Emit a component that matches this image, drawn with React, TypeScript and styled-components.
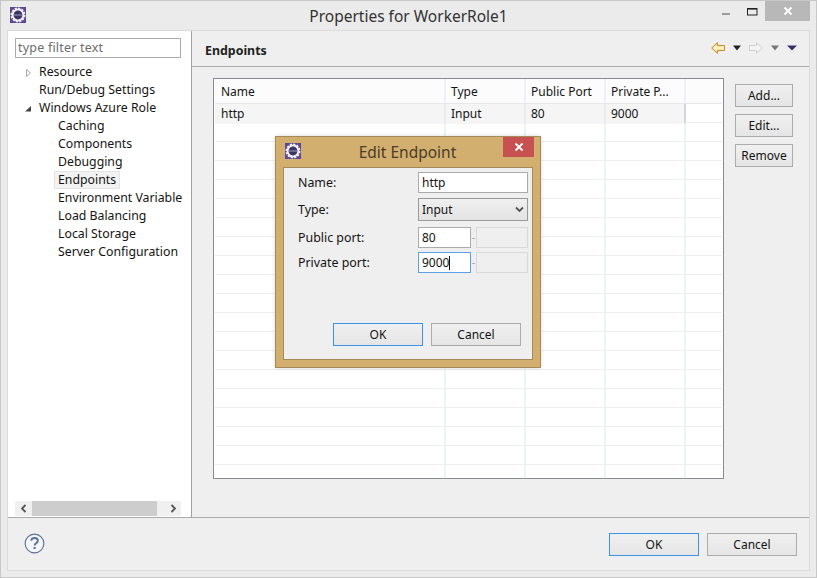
import styled, { createGlobalStyle } from "styled-components";

const GlobalStyle = createGlobalStyle`
  html, body {
    margin: 0;
    padding: 0;
    background: #ebebeb;
  }
  * {
    box-sizing: border-box;
  }
`;

const Window = styled.div`
  width: 817px;
  height: 578px;
  display: flex;
  flex-direction: column;
  position: relative;
  background: #ebebeb;
  border: 1px solid #c8c8c8;
  font-family: "Noto Sans", "Open Sans", sans-serif;
  font-size: 12px;
  color: #141414;
  overflow: hidden;
`;

const TitleBar = styled.div`
  height: 29px;
  flex: none;
  display: flex;
  align-items: flex-start;
  position: relative;
  padding-left: 9px;
  padding-top: 6px;
`;

const TitleText = styled.div`
  position: absolute;
  left: 0;
  right: 0;
  top: 4px;
  text-align: center;
  font-size: 15.5px;
  color: #333;
`;

const Controls = styled.div`
  margin-left: auto;
  margin-top: -6px;
  margin-right: 6px;
  display: flex;
  align-items: flex-start;
`;

const ControlButton = styled.div<{ $close?: boolean }>`
  width: ${(p) => (p.$close ? "45px" : "26px")};
  height: 20px;
  display: flex;
  align-items: center;
  justify-content: center;
  background: ${(p) => (p.$close ? "#b8b8b8" : "transparent")};
  color: #fff;
`;

const Panel = styled.div`
  flex: 1;
  min-height: 0;
  margin: 0 6px 6px;
  display: flex;
  flex-direction: column;
  background: #efefef;
  border: 1px solid #dcdcdc;
`;

const Main = styled.div`
  flex: 1;
  display: flex;
  min-height: 0;
`;

const Sidebar = styled.div`
  width: 184px;
  flex: none;
  display: flex;
  flex-direction: column;
  background: #fff;
  border-right: 1px solid #a0a0a0;
  padding: 7px 10px 0 7px;
`;

const FilterInput = styled.div`
  height: 20px;
  flex: none;
  border: 1px solid #ababab;
  padding-left: 2px;
  line-height: 17px;
  font-size: 12.5px;
  letter-spacing: 0.2px;
  color: #6d6d6d;
`;

const Tree = styled.div`
  flex: 1;
  padding-top: 5px;
  font-size: 12.3px;
`;

const TreeRow = styled.div<{ $depth: number }>`
  height: 18px;
  line-height: 18px;
  display: flex;
  align-items: center;
  white-space: nowrap;
  position: relative;
  padding-left: ${(p) => (p.$depth === 0 ? 24 : 43)}px;
`;

const TreeLabel = styled.span<{ $selected?: boolean }>`
  ${(p) =>
    p.$selected &&
    `
    height: 18px;
    line-height: 16px;
    margin-left: -4px;
    padding: 0 3px;
    background: #f2f2f2;
    border: 1px solid #e4e4e4;
  `}
`;

const Twist = styled.svg`
  position: absolute;
  left: 9px;
  top: 5px;
`;

const HScroll = styled.div`
  height: 15px;
  flex: none;
  margin-bottom: 1px;
  display: flex;
  align-items: center;
  background: #f0f0f0;
`;

const ScrollArrow = styled.div`
  width: 17px;
  height: 15px;
  display: flex;
  align-items: center;
  justify-content: center;
`;

const ScrollThumb = styled.div`
  width: 125px;
  height: 15px;
  margin-right: auto;
  background: #cdcdcd;
`;

const Content = styled.div`
  flex: 1;
  display: flex;
  flex-direction: column;
  min-width: 0;
  min-height: 0;
`;

const PageHeader = styled.div`
  height: 36px;
  flex: none;
  display: flex;
  align-items: center;
  padding: 3px 12px 0 13px;
  border-bottom: 1px solid #a9a9a9;
`;

const PageTitle = styled.div`
  font-weight: 700;
  font-size: 12.4px;
  color: #222;
`;

const NavIcons = styled.div`
  margin-left: auto;
  margin-top: -4px;
  display: flex;
  align-items: center;
  gap: 8px;
`;

const PageBody = styled.div`
  flex: 1;
  min-height: 0;
  display: flex;
  padding: 11px 16px 38px 21px;
  gap: 11px;
`;

const TableBox = styled.div`
  width: 511px;
  flex: none;
  background: #fff;
  border: 1px solid #8a8a94;
  padding: 0 0 1px 1px;
  overflow: hidden;
`;

const HeaderRow = styled.div`
  height: 25px;
  display: grid;
  grid-template-columns: 231px 80px 80px 80px 1fr;
  margin-right: 1px;
  background: #fcfcfc;
  border-bottom: 1px solid #e6e8ec;
`;

const HeaderCell = styled.div`
  padding-left: 5px;
  line-height: 25px;
  height: 24px;
  border-right: 2px solid #eef2f8;
  white-space: nowrap;
  overflow: hidden;

  &:first-child {
    padding-left: 6px;
  }
`;

const Row = styled.div`
  height: 19px;
  display: grid;
  grid-template-columns: 231px 80px 80px 80px 1fr;
  margin-right: 1px;
  border-bottom: 1px solid #eeeeee;
`;

const Cell = styled.div<{ $active?: boolean }>`
  padding-left: 5px;
  line-height: 20px;
  background: ${(p) => (p.$active ? "#f5f5f5" : "transparent")};
  border-right: 2px solid ${(p) => (p.$active ? "#e9ebef" : "#edf2f9")};

  &:first-child {
    padding-left: 6px;
  }

  &:nth-child(4) {
    border-right-color: ${(p) => (p.$active ? "#d4d8de" : "#edf2f9")};
  }
`;

const EmptyCell = styled.div``;

const SideButtons = styled.div`
  display: flex;
  flex-direction: column;
  gap: 7px;
  padding-top: 6px;
`;

const Button = styled.div<{ $width: number; $focused?: boolean }>`
  width: ${(p) => p.$width}px;
  height: 23px;
  display: flex;
  align-items: center;
  justify-content: center;
  background: linear-gradient(#f0f0f0, #e5e5e5);
  border: 1px solid ${(p) => (p.$focused ? "#3c94e8" : "#acacac")};
  color: #141414;
`;

const Footer = styled.div`
  height: 53px;
  flex: none;
  display: flex;
  align-items: center;
  gap: 8px;
  padding: 0 12px 0 16px;
  border-top: 1px solid #a9a9a9;
`;

const HelpIcon = styled.svg`
  margin-right: auto;
  margin-top: -2px;
`;

const DialogFrame = styled.div`
  position: absolute;
  left: 274px;
  top: 135px;
  width: 266px;
  height: 232px;
  display: flex;
  flex-direction: column;
  background: #d2ae6f;
  border: 1px solid #a58a5c;
  box-shadow: 0 0 4px rgba(0, 0, 0, 0.15);
  padding: 0 7px 7px;
`;

const DialogTitleBar = styled.div`
  height: 30px;
  flex: none;
  position: relative;
  display: flex;
  align-items: flex-start;
  margin: 0 -1px;
  padding-top: 6px;
  padding-left: 3px;
`;

const DialogTitle = styled.div`
  position: absolute;
  left: -1px;
  right: 0;
  top: 4px;
  text-align: center;
  font-size: 15.5px;
  color: #4a3d28;
`;

const DialogClose = styled.div`
  margin-left: auto;
  margin-top: -6px;
  width: 31px;
  height: 20px;
  display: flex;
  align-items: center;
  justify-content: center;
  background: #c75050;
`;

const DialogBody = styled.div`
  flex: 1;
  display: flex;
  flex-direction: column;
  background: #efefef;
  border: 1px solid #a58a5c;
  padding: 4px 5px 13px 14px;
`;

const FormRow = styled.div<{ $height: number; $gap: number }>`
  height: ${(p) => p.$height}px;
  margin-top: ${(p) => p.$gap}px;
  display: grid;
  grid-template-columns: 120px 1fr;
  align-items: center;
  flex: none;
`;

const FormLabel = styled.span`
  font-size: 12.4px;
`;

const TextInput = styled.div`
  height: 21px;
  width: 110px;
  background: #fff;
  border: 1px solid #ababab;
  padding-left: 3px;
  line-height: 19px;
`;

const SelectBox = styled.div`
  height: 23px;
  width: 110px;
  display: flex;
  align-items: center;
  justify-content: space-between;
  padding: 0 3px;
  background: linear-gradient(#f0f0f0, #e3e3e3);
  border: 1px solid #9a9a9a;
`;

const PortFields = styled.div`
  display: flex;
  align-items: center;
`;

const PortInput = styled.div<{ $focused?: boolean }>`
  height: 21px;
  width: 53px;
  background: #fff;
  border: 1px solid ${(p) => (p.$focused ? "#5aa0e8" : "#ababab")};
  padding-left: 3px;
  line-height: 19px;
`;

const Caret = styled.span`
  display: inline-block;
  width: 1px;
  height: 14px;
  background: #111;
  vertical-align: -3px;
`;

const PortDash = styled.span`
  width: 5px;
  text-align: center;
  color: #b0b0b0;
`;

const PortDisabled = styled.div`
  height: 21px;
  width: 52px;
  background: #efefef;
  border: 1px solid #d9d9d9;
`;

const DialogButtons = styled.div`
  margin-top: auto;
  display: flex;
  justify-content: flex-end;
  gap: 8px;
  padding-right: 6px;
`;

const treeItems = [
  { label: "Resource", depth: 0, twist: "closed" },
  { label: "Run/Debug Settings", depth: 0 },
  { label: "Windows Azure Role", depth: 0, twist: "open" },
  { label: "Caching", depth: 1 },
  { label: "Components", depth: 1 },
  { label: "Debugging", depth: 1 },
  { label: "Endpoints", depth: 1, selected: true },
  { label: "Environment Variable", depth: 1 },
  { label: "Load Balancing", depth: 1 },
  { label: "Local Storage", depth: 1 },
  { label: "Server Configuration", depth: 1 },
];

const EclipseIcon = () => (
  <svg width="16" height="16" viewBox="0 0 16 16">
    <rect width="16" height="16" fill="#5d4793" />
    <circle cx="8" cy="8" r="5.4" fill="none" stroke="#efefef" strokeWidth="2" />
    <circle cx="8" cy="8" r="6.6" fill="none" stroke="#efefef" strokeWidth="1.8" strokeDasharray="2.2 1.25" />
    <circle cx="8" cy="8" r="4.2" fill="#3d3560" />
    <rect x="4" y="7.2" width="8" height="1.6" fill="#77739b" />
  </svg>
);

const Triangle = ({ color, width = 8 }: { color: string; width?: number }) => (
  <svg width={width} height="6" viewBox={`0 0 ${width} 6`}>
    <path d={`M0 0.5h${width}L${width / 2} 5.5z`} fill={color} />
  </svg>
);

const App = () => {
  return (
    <>
      <GlobalStyle />
      <Window>
        <TitleBar>
          <EclipseIcon />
          <TitleText>Properties for WorkerRole1</TitleText>
          <Controls>
            <ControlButton>
              <svg width="10" height="10" viewBox="0 0 10 10">
                <rect x="1" y="7" width="8" height="2" fill="#9a9a9a" />
              </svg>
            </ControlButton>
            <ControlButton>
              <svg width="11" height="10" viewBox="0 0 11 10">
                <rect x="0.5" y="2.5" width="9.5" height="6.5" fill="none" stroke="#222" />
                <rect x="0.5" y="2" width="9.5" height="1.6" fill="#222" />
              </svg>
            </ControlButton>
            <ControlButton $close>
              <svg width="10" height="10" viewBox="0 0 10 10">
                <path d="M1.5 1.5l7 7M8.5 1.5l-7 7" stroke="#fff" strokeWidth="1.8" />
              </svg>
            </ControlButton>
          </Controls>
        </TitleBar>
        <Panel>
          <Main>
            <Sidebar>
              <FilterInput>type filter text</FilterInput>
              <Tree>
                {treeItems.map((item) => (
                  <TreeRow key={item.label} $depth={item.depth}>
                    {item.twist === "closed" && (
                      <Twist width="8" height="10" viewBox="0 0 8 10">
                        <path d="M2.5 1.5l4 3.5-4 3.5z" fill="#fff" stroke="#a8a8a8" />
                      </Twist>
                    )}
                    {item.twist === "open" && (
                      <Twist width="8" height="10" viewBox="0 0 8 10">
                        <path d="M1 7.5L7 2v5.5z" fill="#444" />
                      </Twist>
                    )}
                    <TreeLabel $selected={item.selected}>{item.label}</TreeLabel>
                  </TreeRow>
                ))}
              </Tree>
              <HScroll>
                <ScrollArrow>
                  <svg width="8" height="9" viewBox="0 0 8 9">
                    <path d="M5.5 1L2 4.5 5.5 8" fill="none" stroke="#555" strokeWidth="1.8" />
                  </svg>
                </ScrollArrow>
                <ScrollThumb />
                <ScrollArrow>
                  <svg width="8" height="9" viewBox="0 0 8 9">
                    <path d="M2.5 1L6 4.5 2.5 8" fill="none" stroke="#555" strokeWidth="1.8" />
                  </svg>
                </ScrollArrow>
              </HScroll>
            </Sidebar>
            <Content>
              <PageHeader>
                <PageTitle>Endpoints</PageTitle>
                <NavIcons>
                  <svg width="14" height="12" viewBox="0 0 14 12">
                    <path d="M0.7 6L6.5 0.7V3.5H13.5V8.5H6.5V11.3z" fill="#fdeebb" stroke="#c98a1e" />
                  </svg>
                  <Triangle color="#222" />
                  <svg width="14" height="12" viewBox="0 0 14 12">
                    <path d="M13.3 6L7.5 0.7V3.5H0.5V8.5H7.5V11.3z" fill="#f4f4f4" stroke="#cfcfcf" />
                  </svg>
                  <Triangle color="#777" />
                  <Triangle color="#3b3368" width={10} />
                </NavIcons>
              </PageHeader>
              <PageBody>
                <TableBox>
                  <HeaderRow>
                    <HeaderCell>Name</HeaderCell>
                    <HeaderCell>Type</HeaderCell>
                    <HeaderCell>Public Port</HeaderCell>
                    <HeaderCell>Private P...</HeaderCell>
                    <EmptyCell />
                  </HeaderRow>
                  <Row>
                    <Cell $active>http</Cell>
                    <Cell $active>Input</Cell>
                    <Cell $active>80</Cell>
                    <Cell $active>9000</Cell>
                    <EmptyCell />
                  </Row>
                  {Array.from({ length: 19 }, (_, i) => (
                    <Row key={i}>
                      <Cell />
                      <Cell />
                      <Cell />
                      <Cell />
                      <EmptyCell />
                    </Row>
                  ))}
                </TableBox>
                <SideButtons>
                  <Button $width={58}>Add...</Button>
                  <Button $width={58}>Edit...</Button>
                  <Button $width={58}>Remove</Button>
                </SideButtons>
              </PageBody>
            </Content>
          </Main>
          <Footer>
            <HelpIcon width="21" height="21" viewBox="0 0 22 22">
              <circle cx="11" cy="11" r="9.8" fill="#f4f6fa" stroke="#5d7396" strokeWidth="1.2" />
              <path d="M7.6 8.2c0-2 1.6-3 3.5-3s3.4 1 3.4 2.9c0 2.6-3.3 2.4-3.3 5" fill="none" stroke="#5d7396" strokeWidth="2" />
              <rect x="10" y="14.6" width="2.2" height="2.2" fill="#5d7396" />
            </HelpIcon>
            <Button $width={90} $focused>OK</Button>
            <Button $width={90}>Cancel</Button>
          </Footer>
        </Panel>
        <DialogFrame>
          <DialogTitleBar>
            <EclipseIcon />
            <DialogTitle>Edit Endpoint</DialogTitle>
            <DialogClose>
              <svg width="10" height="10" viewBox="0 0 10 10">
                <path d="M1.5 1.5l7 7M8.5 1.5l-7 7" stroke="#fff" strokeWidth="1.8" />
              </svg>
            </DialogClose>
          </DialogTitleBar>
          <DialogBody>
            <FormRow $height={21} $gap={0}>
              <FormLabel>Name:</FormLabel>
              <TextInput>http</TextInput>
            </FormRow>
            <FormRow $height={23} $gap={5}>
              <FormLabel>Type:</FormLabel>
              <SelectBox>
                Input
                <svg width="9" height="7" viewBox="0 0 9 7">
                  <path d="M1 1.5l3.5 3.5L8 1.5" fill="none" stroke="#555" strokeWidth="1.8" />
                </svg>
              </SelectBox>
            </FormRow>
            <FormRow $height={21} $gap={6}>
              <FormLabel>Public port:</FormLabel>
              <PortFields>
                <PortInput>80</PortInput>
                <PortDash>-</PortDash>
                <PortDisabled />
              </PortFields>
            </FormRow>
            <FormRow $height={21} $gap={4}>
              <FormLabel>Private port:</FormLabel>
              <PortFields>
                <PortInput $focused>9000<Caret /></PortInput>
                <PortDash>-</PortDash>
                <PortDisabled />
              </PortFields>
            </FormRow>
            <DialogButtons>
              <Button $width={90} $focused>OK</Button>
              <Button $width={90}>Cancel</Button>
            </DialogButtons>
          </DialogBody>
        </DialogFrame>
      </Window>
    </>
  );
};

export default App;
